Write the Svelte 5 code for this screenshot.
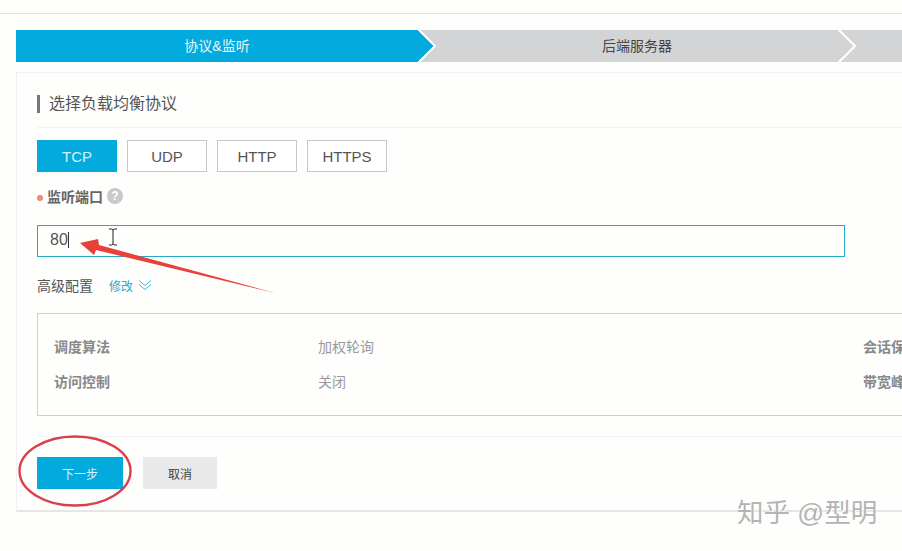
<script>
  const protocols = ['TCP', 'UDP', 'HTTP', 'HTTPS'];
  let active = 'TCP';

  const summary = [
    ['调度算法', '加权轮询', '会话保持'],
    ['访问控制', '关闭', '带宽峰值']
  ];
</script>

<div class="page">
  <div class="topbar"></div>

  <div class="steps">
    <div class="step current">协议&amp;监听</div>
    <svg class="sep" viewBox="0 0 18 32" width="18" height="32">
      <polygon points="0,0 16,16 0,32" fill="#03aade" />
      <polyline points="0,-1 17,16 0,33" fill="none" stroke="#fff" stroke-width="2" />
    </svg>
    <div class="step">后端服务器</div>
    <svg class="sep" viewBox="0 0 18 32" width="18" height="32">
      <polyline points="0,-1 17,16 0,33" fill="none" stroke="#fff" stroke-width="2" />
    </svg>
    <div class="step"></div>
  </div>

  <div class="card">
    <h2 class="title"><span>选择负载均衡协议</span></h2>

    <div class="protocols">
      {#each protocols as p}
        <button class:on={p === active}>{p}</button>
      {/each}
    </div>

    <div class="field-label">
      <i class="dot"></i>
      <span>监听端口</span>
      <i class="help">?</i>
    </div>

    <div class="input"><span>80</span><i class="caret"></i></div>

    <div class="advanced">
      <span class="adv-label">高级配置</span>
      <span class="adv-link">修改</span>
      <svg width="14" height="12" viewBox="0 0 14 12" fill="none" stroke="#45b4d6" stroke-width="1">
        <path d="M1 1.500 7 6.500 13 1.500" />
        <path d="M1 5.500 7 10.500 13 5.500" />
      </svg>
    </div>

    <div class="summary">
      {#each summary as row}
        <div class="row">
          <span class="key">{row[0]}</span>
          <span class="val">{row[1]}</span>
          <span class="key">{row[2]}</span>
        </div>
      {/each}
    </div>

    <div class="actions">
      <button class="next">下一步</button>
      <button class="cancel">取消</button>
    </div>
  </div>

  <!-- annotations drawn over the screenshot -->
  <svg class="marks" width="902" height="551" viewBox="0 0 902 551">
    <polygon points="80,243 98,239 99,245 275,293 96,250 94,255" fill="#e9403a" />
    <ellipse cx="75" cy="471" rx="55.500" ry="34.500" fill="none" stroke="#d8404a" stroke-width="2.400" />
    <path d="M109 229h2.500l1.500 1 1.500-1h2.500M113 230v14M109 245h2.500l1.500-1 1.500 1h2.500" fill="none" stroke="#222" stroke-width="1" />
  </svg>

  <div class="watermark">知乎 @型明</div>
</div>

<style>
  :global(body) {
    margin: 0;
    background: #fefefd;
    overflow: hidden;
  }

  .page {
    position: relative;
    width: 902px;
    height: 551px;
    overflow: hidden;
    font-family: "Liberation Sans", "Noto Sans CJK SC", sans-serif;
    color: #444;
  }

  .topbar {
    height: 13px;
    border-bottom: 1px solid #e2e2e2;
  }

  .steps {
    display: flex;
    width: 1300px;
    margin: 16px 0 0 16px;
    background: #d3d4d5;
  }

  .step {
    flex: 0 0 402px;
    height: 32px;
    line-height: 32px;
    text-align: center;
    font-size: 14px;
    color: #444;
  }

  .step.current {
    background: #03aade;
    color: #e8f8fc;
  }

  .sep {
    flex: 0 0 18px;
    display: block;
  }

  .card {
    width: 1000px;
    height: 437px;
    margin: 10px 0 0 16px;
    padding: 0 20px;
    border: 1px solid #f1f1f1;
    border-bottom: 2px solid #e6e6e6;
  }

  .title {
    margin: 0 0 12px;
    padding: 22px 0 14px;
    border-bottom: 1px solid #f2f2f2;
    font-size: 16px;
    font-weight: 400;
    line-height: 18px;
    color: #555;
  }

  .title span {
    display: block;
    padding-left: 9px;
    border-left: 3px solid #777;
  }

  .protocols {
    display: flex;
    gap: 10px;
  }

  button {
    font-family: inherit;
    margin: 0;
    padding: 0;
    border: 0;
  }

  .protocols button {
    width: 80px;
    height: 32px;
    border: 1px solid #c6c8c9;
    background: #fff;
    color: #555;
    font-size: 15px;
  }

  .protocols button.on {
    border-color: #03aade;
    background: #03aade;
    color: #d5f2fa;
  }

  .field-label {
    display: flex;
    align-items: center;
    height: 16px;
    margin-top: 16px;
    font-size: 14px;
    font-weight: 700;
    color: #666;
  }

  .dot {
    width: 6px;
    height: 6px;
    margin: 4px 4px 0 0;
    border-radius: 50%;
    background: #f08a72;
  }

  .help {
    width: 16px;
    height: 16px;
    margin-left: 4px;
    border-radius: 50%;
    background: #c9c9c9;
    color: #fff;
    font-size: 12px;
    font-style: normal;
    line-height: 16px;
    text-align: center;
  }

  .input {
    display: flex;
    align-items: center;
    box-sizing: border-box;
    width: 808px;
    height: 32px;
    margin-top: 21px;
    padding: 0 0 2px 12px;
    border: 1px solid #27a9c8;
    font-size: 16px;
    color: #555;
  }

  .caret {
    width: 1px;
    height: 16px;
    background: #333;
  }

  .advanced {
    display: flex;
    align-items: center;
    height: 20px;
    margin-top: 18px;
  }

  .adv-label {
    font-size: 14px;
    color: #555;
    margin-right: 16px;
  }

  .adv-link {
    font-size: 12px;
    color: #2ba7cc;
    margin-right: 5px;
  }

  .summary {
    box-sizing: border-box;
    width: 960px;
    height: 103px;
    margin-top: 18px;
    padding: 16px 0 0 16px;
    border: 1px solid #cfcfcf;
  }

  .row {
    display: grid;
    grid-template-columns: 264px 545px 1fr;
    height: 35px;
    line-height: 35px;
    font-size: 14px;
  }

  .key {
    font-weight: 700;
    color: #888;
  }

  .val {
    color: #999;
  }

  .actions {
    display: flex;
    gap: 20px;
    margin-top: 20px;
    padding-top: 20px;
    border-top: 1px solid #f3f3f3;
  }

  .actions button {
    height: 32px;
    font-size: 12px;
  }

  .next {
    width: 86px;
    background: #03aade;
    color: #d8f4fb;
  }

  .cancel {
    width: 74px;
    background: #e9e9e9;
    color: #444;
  }

  .marks {
    position: absolute;
    left: 0;
    top: 0;
    pointer-events: none;
  }

  .watermark {
    position: absolute;
    left: 737px;
    top: 495px;
    font-size: 26.500px;
    line-height: 36px;
    white-space: nowrap;
    color: #b4b4b4;
    text-shadow: 1px 1px 0 #fff;
  }
</style>
